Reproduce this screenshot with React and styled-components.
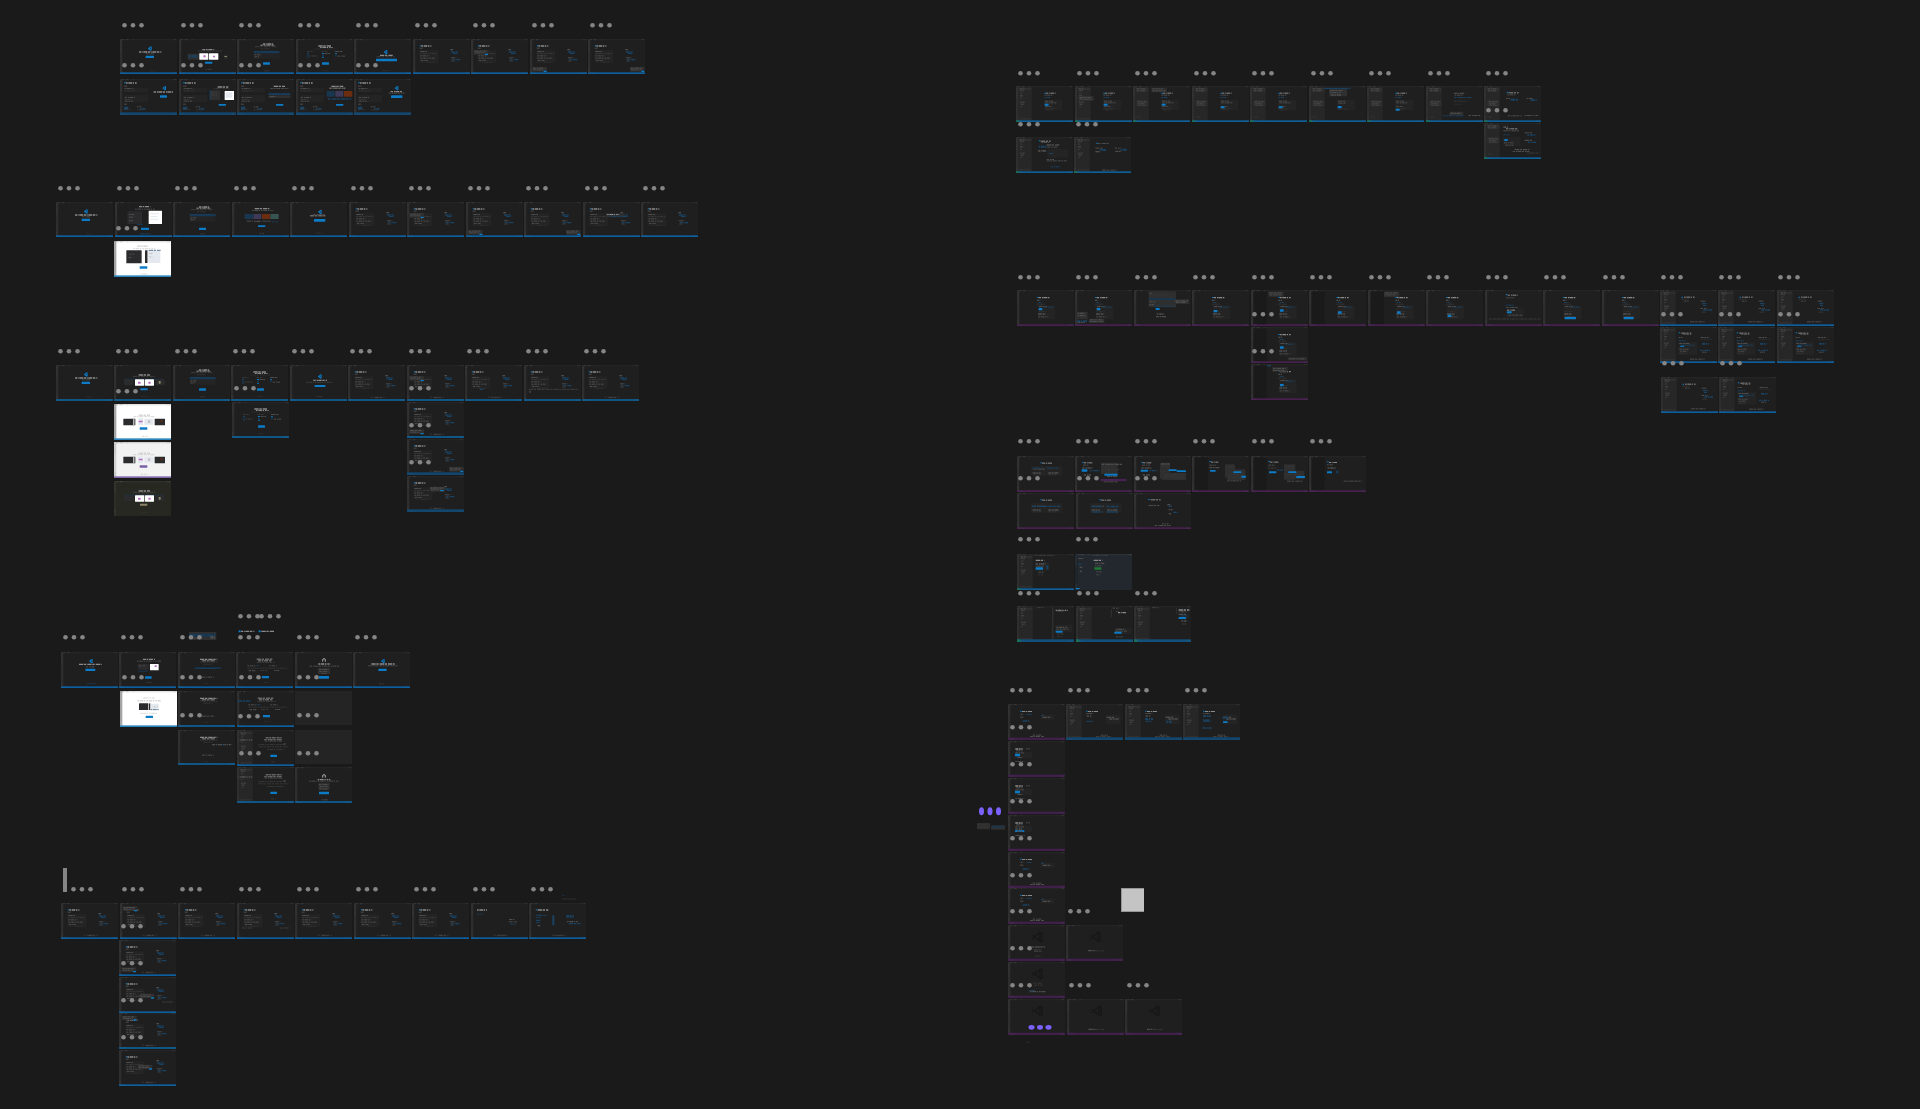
import React from "react";
import styled, { createGlobalStyle, css } from "styled-components";

const Global = createGlobalStyle`
  body { margin: 0; background: #1a1a1a; font-family: Inter, "Liberation Sans", sans-serif; }
`;

const Canvas = styled.main`
  position: relative;
  width: 100%;
  min-height: 100vh;
  overflow: hidden;
  background: #1a1a1a;
`;

const onCanvas = css`
  position: absolute;
  left: ${(p) => p.$x}px;
  top: ${(p) => p.$y}px;
`;

// A horizontal run of equal slots on the canvas.
const Strip = styled.section`
  ${onCanvas}
  display: flex;
  justify-content: space-between;
  align-items: flex-start;
  width: ${(p) => Math.floor((p.$count - 1) * 58.5) + 57}px;
`;

const Slot = styled.div`
  flex: 0 0 57px;
`;

const FrameBox = styled.article`
  flex: 0 0 57px;
  height: ${(p) => p.$h}px;
  background: ${(p) => p.$bg};
  svg { display: block; width: 100%; height: 100%; }
`;

const Loose = styled.div`
  ${onCanvas}
  svg { display: block; }
`;

const Block = styled.div`
  ${onCanvas}
  width: ${(p) => p.$w}px;
  height: ${(p) => p.$h}px;
  background: ${(p) => p.$c};
`;

const Swatch = styled(Block)`
  box-sizing: border-box;
  border: 1px solid #969696;
  border-right: 0;
`;

const INK = {
  t: "#4d4d4d",
  T: "#8a8a8a",
  d: "#363636",
  b: "#1a4262",
  c: "#c4c4c4",
  B: "#0c7bc8",
  p: "#242424",
  P: "#2f2f2f",
  w: "#ffffff",
  k: "#2b2b2d",
  m: "#b76fc4",
  n: "#183650",
  v: "#3e3957",
  o: "#6b2c10",
  g: "#375452",
  u: "#7b5ea9",
  G: "#1f7a33",
  U: "#4b2155",
  y: "#8b8468",
  l: "#e4e8ef",
};

const DASHES = ["9 2 5 2 12 3", "5 2 11 2 4 3", "13 2 7 3", "7 3 4 1 10 2"];

// Each mark is "kind x y width height", in thirds of a screen pixel.
// t, T, d, b and c are lines of writing; the others are filled shapes.
function Marks({ spec }) {
  return spec
    .split(",")
    .map((s) => s.trim())
    .filter(Boolean)
    .map((s, i) => {
      const [k, ...n] = s.split(" ");
      const [x, y, w, h = 3] = n.map(Number);
      if (k === "tri") return <path key={i} d={`M${x} ${y + 5}l8-6 3 1v11l-3 1-8-6zM${x + 5} ${y + 5}l3 3v-6z`} fill="#0c7bc8" />;
      if (k === "logo")
        return (
          <path
            key={i}
            d={`M${x + 2} ${y + 11}L${x + 26} ${y + 28}V${y + 3}L${x + 2} ${y + 21}M${x + 26} ${y + 1}l7 4v22l-7 4`}
            fill="none"
            stroke="#171717"
            strokeWidth="4"
          />
        );
      if (k === "bell") return <path key={i} d={`M${x + 1} ${y + 10}v-5a4 4 0 0 1 8 0v5`} fill="none" stroke="#a8a8a8" strokeWidth="3" />;
      if ("tTdbc".includes(k))
        return (
          <line
            key={i}
            x1={x}
            x2={x + w}
            y1={y + h / 2}
            y2={y + h / 2}
            stroke={INK[k]}
            strokeWidth={h}
            strokeDasharray={DASHES[(x + y + i) % 4]}
          />
        );
      return <rect key={i} x={x} y={y} width={w} height={h} fill={INK[k]} rx="1" />;
    });
}

const TONES = {
  dark: { bg: "#1f1f1f", rail: "#2e2e2e", top: "#242424", tick: "#444444" },
  white: { bg: "#ffffff", rail: "#8c8c8c", top: "#e2e2e2", tick: "#b8b8b8" },
  light: { bg: "#f2f2f2", rail: "#c8c8c8", top: "#d2d2d2", tick: "#a8a8a8" },
  olive: { bg: "#272822", rail: "#2e2f29", top: "#30312b", tick: "#55554b" },
  slate: { bg: "#22282e", rail: "#1f252b", top: "#2a3138", tick: "#46525d" },
  empty: { bg: "#242424" },
};

const BARS = {
  blue: ["#0b5f9f", 5],
  deep: ["#12466d", 8],
  mid: ["#0f5687", 6],
  purple: ["#48204f", 5],
  plum: ["#40204a", 7],
  lilac: ["#8069ab", 5],
  sky: ["#2f86be", 5],
  run: ["#0d5f98", 5],
  runDeep: ["#12507b", 8],
};

function Frame({ h = 36, tone = "dark", bar = "blue", side, spec = "" }) {
  const c = TONES[tone];
  const H = h * 3;
  const b = BARS[bar];
  return (
    <FrameBox $h={h} $bg={c.bg}>
      {tone !== "empty" && (
        <svg viewBox={`0 0 171 ${H}`} preserveAspectRatio="none" aria-hidden="true">
          {side && <rect x="7" y="3" width="40" height={H - 3} fill={side === "dim" ? "#1a1a1a" : "#272727"} />}
          <rect width="171" height="4" fill={c.top} />
          <line x1="5" x2="42" y1="2" y2="2" stroke={c.tick} strokeWidth="2" strokeDasharray="7 5 9 14" />
          <line x1="160" x2="169" y1="2" y2="2" stroke={c.tick} strokeWidth="2" strokeDasharray="3 2" />
          <rect width="7" height={H} fill={c.rail} opacity={tone === "dark" ? 1 : 0.8} />
          <line x1="3" x2="3" y1="6" y2="36" stroke={c.tick} strokeWidth="3" strokeDasharray="3 4" opacity=".7" />
          <line x1="3" x2="3" y1={H - 16} y2={H - 6} stroke={c.tick} strokeWidth="3" strokeDasharray="3 3" opacity=".7" />
          {side === "full" && (
            <Marks spec={`P 8 5 38 7, t 11 7 16 3, t 11 13 13 2, t 12 20 8 2, t 12 28 9 3, t 12 36 7 2, t 12 47 14 3, t 14 53 9 3, t 13 60 6 2, P 8 ${H - 12} 38 5`} />
          )}
          {side === "groups" && (
            <Marks spec={`P 8 5 38 12, t 11 7 28 3, t 12 13 24 3, P 10 43 36 18, t 14 46 26 3, t 16 52 20 3, t 16 57 22 2, d 11 ${H - 16} 14 2`} />
          )}
          <Marks spec={spec} />
          {b && <rect y={H - b[1]} width="171" height={b[1]} fill={b[0]} />}
          {bar.startsWith("run") && <rect y={H - b[1]} width="10" height={b[1]} fill="#176f55" />}
          {b && tone === "dark" && (
            <path d={`M4 ${H - 3}h15M157 ${H - 3}h10`} stroke="#7899b0" strokeWidth="1" strokeDasharray="4 2" opacity=".4" />
          )}
        </svg>
      )}
    </FrameBox>
  );
}

function Dots({ color = "#858585", shape }) {
  const [rx, ry] = shape === "tall" ? [2.5, 4] : shape === "wide" ? [3, 2.4] : [2.3, 2.3];
  return (
    <svg width="28" height="10" display="block" aria-hidden="true">
      {[4.5, 13, 21.5].map((cx) => (
        <ellipse key={cx} cx={cx} cy="5.3" rx={rx} ry={ry} fill={color} />
      ))}
    </svg>
  );
}

const S = {
  welcome: "tri 84 23 0 0, T 57 37 67 4, t 78 43 24 3, B 77 50 25 7, d 92 95 14 2",
  welcomeWide: "tri 84 24 0 0, t 70 36 36 3, T 60 40 46 3, B 72 51 34 8, d 78 92 20 2",
  done: "tri 84 29 0 0, T 70 44 42 4, t 48 51 80 2, B 74 60 32 6, d 80 93 16 3",
  themes: "T 70 30 36 4, t 58 35 70 2, P 26 44 34 18, b 28 48 28 8, w 61 43 27 19, w 90 43 28 19, m 73 49 7 6, m 102 50 6 5, k 136 47 10 14, y 136 51 8 3, B 78 68 22 6, t 80 90 20 2",
  themesRow: "T 74 28 34 4, t 56 33 68 2, n 30 41 118 3, k 30 43 28 18, w 63 43 28 19, w 93 43 27 19, m 72 50 8 6, m 103 50 7 6, k 124 43 28 18, y 134 48 6 8, B 79 70 22 6, d 82 94 20 2",
  lightThemes: "c 74 32 34 3, c 58 37 66 2, k 28 44 36 20, w 58 45 3 18, l 73 43 14 20, m 74 50 12 5, l 91 44 27 18, c 102 49 7 8, k 122 44 31 20, o 140 49 5 6",
  cards: "T 78 13 30 4, T 70 17 42 3, t 54 22 66 2, d 72 28 26 3, p 50 35 78 24, n 50 36 78 7, b 52 37 70 3, t 52 46 20 3, t 52 52 14 3, B 78 70 21 7, d 82 94 16 3",
  columns: "T 67 19 40 4, T 72 24 38 3, d 58 29 62 2, d 33 36 20 3, b 33 42 6 3, b 33 47 6 3, b 33 53 6 3, t 40 50 26 2, d 76 36 20 3, B 78 42 6 3, b 78 47 6 3, B 78 53 6 3, t 86 42 18 3, t 117 36 22 3, B 117 43 6 3, b 117 49 6 3, t 125 50 22 3, B 78 70 21 7, d 80 94 18 2",
  start: "B 20 19 5 3, T 25 19 30 4, t 20 26 9 3, p 19 34 57 38, t 22 36 20 3, d 22 42 50 3, t 22 49 28 3, t 22 56 43 3, t 24 63 20 3, d 42 69 22 2, t 112 30 8 4, b 114 37 20 4, b 120 42 16 3, t 114 55 16 3, b 117 60 27 4, t 114 65 12 2",
};
const sign = ", d 68 95 44 3, t 80 97 22 2";
const pop = (x, y) => `, P ${x} ${y} 44 14, t ${x + 2} ${y + 2} 34 3, t ${x + 3} ${y + 7} 30 3, B ${x + 34} ${y + 11} 9 4`;
const splitLeft = "B 12 10 6 3, T 18 10 32 4, t 12 20 10 3, p 12 27 72 13, t 14 27 28 3, d 14 34 34 3, p 12 48 72 22, t 14 54 31 3, d 14 60 20 3, t 14 65 25 3, t 12 74 9 3, b 12 83 14 10, d 17 90 14 3, t 50 82 14 3, b 60 87 16 5, d 51 91 22 3";
const mono = (dx = 0, by = 54, bw = 11) =>
  `B ${60 + dx} 21 5 3, T ${65 + dx} 21 32 4, t ${60 + dx} 29 11 4, b ${64 + dx} 36 12 3, d ${60 + dx} 41 24 3, p ${62 + dx} 46 53 42, t ${66 + dx} 48 24 3, b ${82 + dx} 50 28 3, d ${65 + dx} 64 26 2, t ${63 + dx} 70 23 4, t ${64 + dx} 79 30 3, B ${65 + dx} ${by} ${bw} 7`;
const workMono = (by = 53) =>
  `B 85 20 5 3, T 90 20 29 3, t 85 26 26 3, b 85 33 20 3, p 84 42 54 30, t 87 44 24 3, t 88 49 33 3, t 88 60 18 3, d 86 66 30 2, d 90 71 20 2, B 86 ${by} 12 6`;
const docs = "B 64 20 5 3, T 72 20 32 3, d 64 26 22 3, t 72 32 14 3, t 122 32 16 3, b 126 39 16 4, b 129 45 10 3, t 122 54 18 3, b 130 58 26 4, d 124 65 16 3, t 90 94 44 3";
const docsCard = "B 56 16 5 3, T 64 17 30 3, t 70 21 24 3, t 56 30 12 3, b 56 40 22 3, p 55 45 56 38, t 58 48 30 3, b 64 53 40 3, B 60 56 13 3, t 58 65 28 3, t 60 71 22 3, d 58 77 24 3, t 122 30 24 3, d 124 36 34 2, b 126 48 20 5, b 120 68 30 4, t 126 74 15 3, t 90 95 44 3";
const wide = "B 70 19 5 3, T 75 20 32 3, p 42 30 94 29, t 50 38 36 3, t 47 49 24 4, t 94 49 30 4, d 50 55 24 3, d 94 55 24 3";

const strips = [];
const row = (x, y, cells, base = {}) =>
  strips.push({ x, y, cells: cells.map((c) => c && { ...base, ...(typeof c === "string" ? { spec: c } : c) }) });
const col = (index, ...cells) => [...Array(index).fill(null), ...cells];
const range = (n) => Array.from({ length: n }, (_, i) => i);
const dotRow = (x, y, indexes) => {
  const cells = Array(Math.max(...indexes) + 1).fill(null);
  indexes.forEach((i) => (cells[i] = { dots: true }));
  strips.push({ x, y: y - 5, cells, over: true });
};

// Onboarding, first pass
row(120, 39, [
  S.welcome,
  S.themes,
  S.cards,
  S.columns,
  "tri 89 34 0 0, T 78 47 38 4, t 68 52 54 2, B 66 59 63 8, d 84 94 26 2",
  S.start,
  S.start + pop(8, 33),
  S.start + pop(7, 84),
  S.start + pop(126, 84),
], { h: 35 });
row(120, 79, [
  splitLeft + ", tri 127 22 0 0, T 101 37 58 4, B 120 49 21 7",
  splitLeft + ", T 116 22 32 4, t 104 28 48 2, P 93 34 30 30, b 92 34 3 28, d 98 38 16 14, w 137 36 28 27, l 140 40 20 16, B 119 75 22 5",
  splitLeft + ", T 110 20 34 4, t 100 27 54 3, n 94 42 66 6, b 96 44 60 3, P 94 49 66 8, t 98 51 18 3, B 117 75 22 5",
  splitLeft + ", T 106 20 36 4, T 100 26 48 3, n 92 36 24 17, v 118 36 24 17, o 144 36 25 17, b 96 58 70 4, B 120 75 22 5",
  splitLeft + ", tri 122 22 0 0, T 110 36 34 4, t 104 41 48 3, B 111 49 34 8",
], { bar: "deep" });
dotRow(120, 25, range(9));
dotRow(120, 65, range(5));

// Onboarding, second pass
row(56, 202, [
  S.welcome,
  "T 72 12 34 4, t 60 20 60 3, k 37 28 44 38, t 42 36 16 3, t 42 44 14 3, t 42 54 12 4, w 101 26 40 40, l 106 34 26 3, l 106 42 22 3, l 106 50 24 3, n 66 66 18 3, B 78 77 24 7, b 76 94 30 3",
  S.cards.replace("B 78 70", "B 78 77"),
  "T 68 18 44 4, t 60 24 64 3, n 38 36 25 15, v 64 36 24 15, o 90 36 24 15, g 115 36 25 15, t 44 56 18 3, t 66 56 22 4, t 92 56 24 3, b 120 58 18 3, B 78 70 22 5, d 82 92 14 4",
  S.welcomeWide,
  S.start,
  S.start + pop(7, 33),
  S.start + pop(6, 84),
  S.start + pop(126, 84),
  S.start + ", P 68 34 58 12, T 72 36 36 3, b 82 41 44 4",
  S.start,
], { h: 35 });
row(56, 241, col(1, { tone: "white", bar: "sky", spec: "c 70 14 34 3, c 58 22 66 2, k 37 28 46 39, t 46 38 16 3, t 44 48 10 3, k 93 28 8 38, l 101 28 38 38, b 104 27 36 2, c 106 36 10 3, c 106 46 9 3, B 77 76 23 7, c 80 98 22 2" }));
dotRow(56, 188, range(11));
dotRow(56, 228, [1]);

// Onboarding, third pass
row(56, 365, [
  S.welcome,
  S.themesRow,
  S.cards,
  S.columns,
  S.done,
  S.start + sign,
  S.start + pop(7, 33) + sign,
  S.start + ", b 44 72 14 3" + sign,
  S.start + ", t 14 72 150 2, t 16 77 4 6",
  S.start + sign,
], { bar: "mid" });
row(56, 402, [null, null, null, S.columns, null, null, S.start + pop(7, 82) + sign], { bar: "mid" });
row(56, 404, col(1, { tone: "white", bar: "sky", spec: S.lightThemes + ", B 77 70 23 7, c 84 96 18 2" }));
row(56, 442, col(1, { tone: "light", bar: "lilac", spec: S.lightThemes + ", u 77 70 23 7, c 80 96 20 2" }));
row(56, 481, col(1, { h: 35, tone: "olive", bar: "none", spec: S.themesRow.replace("B 79 70 22 6", "y 78 68 22 6") }));
row(56, 439, col(6, S.start + pop(126, 84) + sign), { bar: "deep" });
row(56, 476, col(6, S.start + ", P 68 32 46 15, t 70 34 40 4, t 72 40 30 3, B 100 42 10 4" + sign), { bar: "deep" });
dotRow(56, 351, range(10));
dotRow(56, 391, [1]);
dotRow(56, 388, [3, 6]);
dotRow(56, 425, [6]);
dotRow(56, 462, [6]);

// Onboarding, fourth pass
const list = "T 66 20 52 4, T 72 25 40 3, t 66 29 54 2, d 76 35 28 3, n 50 46 78 5, b 54 48 60 2, t 72 74 36 3, d 76 94 16 2";
const grid = "T 62 20 50 3, T 66 25 40 3, t 62 30 54 2, t 34 40 26 3, b 62 39 8 4, t 100 40 22 3, d 34 47 120 3, t 38 54 20 4, d 72 54 24 3, t 114 54 16 3, B 78 72 21 7, d 82 91 18 2";
row(61, 652, [
  "tri 84 22 0 0, T 54 35 68 4, t 74 43 28 3, B 73 50 30 7, b 78 94 26 2",
  "T 72 20 36 4, t 54 26 72 3, k 56 36 34 17, t 60 40 18 3, w 93 36 26 19, m 107 40 6 5, n 58 56 28 3, B 78 73 20 7, d 82 90 16 3",
  list,
  grid,
  "bell 82 19 0 0, T 70 34 36 4, t 44 41 88 3, P 69 48 36 18, t 72 51 28 3, t 73 57 24 3, t 80 63 14 3, B 72 72 30 8",
  "tri 84 22 0 0, T 55 34 70 4, t 46 40 88 3, B 76 50 25 7, d 78 94 18 3",
]);
row(61, 691, [
  null,
  { tone: "white", bar: "sky", spec: "c 70 20 34 2, c 52 28 70 3, k 57 37 28 20, k 87 37 4 20, l 92 38 24 18, c 100 46 14 3, b 92 55 26 2, c 60 66 52 2, B 77 74 22 7" },
  { bar: "mid", spec: list.replace("n 50 46 78 5, b 54 48 60 2, ", "") },
  grid + ", b 2 28 40 4",
  { tone: "empty", h: 34 },
]);
const offset = "T 86 22 48 3, T 82 28 52 3, t 84 33 54 2, d 64 42 80 3, t 140 40 6 4, d 64 49 88 3, d 90 57 50 3, B 100 74 20 7, d 102 94 14 3, t 8 28 38 4";
row(61, 730, [
  null,
  null,
  { h: 35, bar: "mid", spec: list.replace("n 50 46 78 5, b 54 48 60 2", "t 102 42 58 4, b 132 43 8 3") },
  { side: "full", spec: offset },
  { tone: "empty", h: 34 },
]);
row(61, 767, col(3,
  { side: "full", spec: offset },
  { spec: "bell 82 22 0 0, T 68 36 38 4, t 42 41 90 3, P 70 47 34 22, t 72 51 28 3, t 74 57 24 3, t 73 64 24 3, B 72 74 30 8, t 80 97 18 3" }
), { bar: "mid" });
dotRow(61, 637, range(6));
dotRow(236, 616, [0]);
dotRow(257, 616, [0]);
dotRow(61, 677, [1, 2, 3, 4]);
dotRow(61, 715, [2, 4]);
dotRow(61, 716, [3]);
dotRow(61, 753, [3, 4]);

// Getting started
row(61, 903, [
  S.start + sign,
  S.start + pop(8, 10) + sign,
  S.start + sign,
  S.start + ", t 14 74 34 2, t 128 74 30 2",
  S.start + sign,
  S.start + sign,
  S.start + sign,
  "T 18 19 30 4, b 18 32 18 3, t 114 48 18 3, t 114 55 24 3, b 118 62 18 3" + sign,
  "B 20 19 5 3, T 26 19 32 4, b 20 35 34 4, b 22 42 14 3, b 20 50 16 4, b 22 57 12 4, t 26 66 8 4, b 70 37 6 30, b 112 36 22 8, t 114 54 34 4, b 120 60 34 4" + sign,
]);
row(61, 940, col(1, S.start + pop(8, 82) + sign));
row(61, 977, col(1, S.start + pop(62, 50) + ", t 130 74 34 2"));
row(61, 1013, col(1, { bar: "mid", spec: S.start + pop(9, 8) + sign }));
row(61, 1050, col(1, S.start + pop(56, 44) + sign));
dotRow(69, 889, [0]);
dotRow(120, 889, range(8));
[926, 963, 1000, 1037].forEach((y) => dotRow(61, y, [1]));

// Workspace with side bar
row(1016, 86, [
  { side: "full", spec: workMono() },
  { side: "full", spec: workMono() + ", P 10 30 46 14, t 13 33 34 3, t 13 38 38 3" },
  { side: "groups", spec: workMono() + ", P 55 5 46 14, t 58 7 34 3, t 58 13 40 3" },
  { side: "groups", spec: workMono(61) },
  { side: "groups", spec: workMono(61) },
  { side: "groups", spec: "n 45 5 80 4, b 47 6 70 3, P 60 9 54 22, t 63 12 40 3, t 63 18 34 3, t 66 25 30 4, p 84 42 54 30, t 87 44 24 3, t 88 50 22 3, B 86 60 12 7, d 88 69 30 2" },
  { side: "groups", spec: workMono(68) },
  { side: "groups", spec: "t 84 20 34 4, t 86 26 24 3, b 84 33 54 3, d 84 44 40 3, d 86 54 22 2, P 70 77 42 12, t 74 80 30 4, b 52 88 60 3, t 128 87 38 3" },
  { side: "groups", spec: "B 68 18 5 3, T 74 19 30 3, t 70 25 24 3, t 66 36 12 3, b 80 38 22 6, t 128 36 18 3, b 140 40 18 5, t 72 88 42 3, t 122 87 40 3" },
], { bar: "run" });
row(1016, 137, [
  { side: "full", spec: "B 68 10 5 3, T 74 11 30 3, t 76 15 26 3, b 68 26 24 6, t 92 22 38 4, t 94 29 32 3, t 66 39 24 5, p 94 36 62 26, b 98 48 14 3, t 92 66 22 3, t 92 70 60 3, b 104 88 28 3" },
  { side: "full", spec: "B 66 17 5 3, t 72 18 32 3, t 64 32 24 3, b 78 36 20 6, t 64 42 14 4, t 122 32 18 3, b 140 35 18 6, t 124 41 18 4, t 84 98 44 3" },
], { bar: "run" });
row(1016, 123, col(8, { side: "groups", spec: "t 58 10 14 5, T 66 16 34 3, t 58 22 50 3, b 58 34 20 3, p 56 42 54 28, B 61 48 10 6, t 60 58 28 3, t 64 65 24 3, t 122 28 24 3, b 130 34 26 4, t 122 50 24 4, b 132 56 24 4, t 92 78 44 4, t 86 84 50 3, t 130 89 36 2" }), { bar: "run" });
dotRow(1016, 73, range(9));
dotRow(1016, 124, [0, 1]);
dotRow(1016, 110, [8]);

// Empty window walkthroughs
row(1017, 290, [
  mono(),
  mono() + ", P 6 66 32 22, t 8 68 22 4, t 8 75 26 4, b 6 91 34 5, t 8 96 22 3, P 42 86 46 13, t 44 88 38 3, t 45 93 40 3",
  "P 44 4 82 48, t 46 8 10 3, d 48 14 50 3, n 44 25 82 5, t 46 34 20 3, t 46 42 14 4, b 60 47 62 3, B 65 54 12 6, P 120 28 46 14, t 124 31 38 4, t 126 36 32 3, t 68 70 22 4, t 66 78 30 4",
  mono(0, 60),
  { side: "dim", spec: mono(22, 58) + ", P 52 5 46 15, t 54 7 38 3, t 56 13 34 3" },
  { side: "dim", spec: mono(22, 64) },
  { side: "dim", spec: mono(22, 64) + ", P 48 5 46 16, t 50 7 38 3, t 50 13 34 3" },
  mono(0, 74),
  "B 62 12 5 3, T 68 14 30 3, t 64 22 24 3, b 62 44 24 3, t 64 51 34 3, p 62 56 54 27, T 66 59 24 3, B 66 64 14 6, t 70 74 42 3, t 12 86 154 2",
  mono(0, 81, 34),
  mono(0, 81, 30),
  { side: "full", bar: "blue", spec: docs },
  { side: "full", bar: "blue", spec: docs },
  { side: "full", bar: "blue", spec: docs },
], { bar: "purple" });
row(1017, 327, [
  ...Array(4).fill(null),
  { bar: "purple", side: "dim", spec: mono(22, 58) + ", P 110 91 58 9, t 114 94 48 3" },
  ...Array(6).fill(null),
  { side: "full", spec: docsCard },
  { side: "full", spec: docsCard },
  { side: "full", spec: docsCard },
]);
row(1017, 364, col(4, { bar: "purple", side: "dim", spec: mono(22, 60) + ", P 64 9 46 14, t 66 12 38 3, t 66 18 34 3, b 48 3 12 4" }));
row(1017, 377, col(11, { side: "full", spec: docs }, { side: "full", spec: docsCard }));
dotRow(1016, 277, range(14));
dotRow(1016, 314, [4, 11, 12, 13]);
dotRow(1016, 351, [4]);
dotRow(1016, 363, [11, 12]);

// Purple status bar set
row(1017, 456, [
  wide + ", b 46 35 34 3, b 90 35 34 3",
  "B 22 18 5 3, T 27 19 26 3, t 24 26 16 3, t 22 34 30 4, B 20 40 17 7, b 44 42 30 4, t 26 55 22 4, P 78 20 50 34, t 80 23 64 4, d 82 31 40 3, d 82 39 50 3, B 88 53 40 6, t 96 60 30 3, U 77 69 78 6, t 86 76 44 3",
  "B 22 18 5 3, T 27 19 26 3, t 24 26 24 3, t 22 34 30 4, B 20 41 22 6, b 46 42 26 4, t 26 55 22 4, P 78 20 30 48, t 82 22 24 4, d 84 30 20 3, d 84 46 20 3, B 104 40 24 5, B 128 43 28 5, P 84 50 72 22, d 90 54 54 4, d 90 61 60 4",
  { side: "dim", spec: "B 52 15 5 3, T 57 17 22 3, t 52 26 20 3, t 52 33 30 4, B 54 42 17 5, P 99 25 30 40, P 106 40 54 32, d 104 30 24 4, B 124 46 24 5, d 108 54 44 4, d 108 62 40 3, B 148 59 14 6, t 106 73 42 3" },
  { side: "dim", spec: "B 52 15 5 3, T 57 17 26 3, t 52 26 20 3, d 52 34 26 4, B 54 46 22 6, b 78 40 18 4, P 99 25 34 46, d 104 30 24 4, P 108 44 52 26, B 112 46 24 5, d 108 54 44 4, B 136 60 26 6, t 108 74 46 3" },
  { side: "dim", spec: "B 54 16 5 3, T 60 18 24 3, t 54 25 18 3, t 56 34 24 4, B 54 46 15 6, b 82 44 6 8, t 104 74 54 3" },
], { bar: "purple" });
row(1017, 493, [
  wide + ", b 44 38 86 4",
  wide + ", b 46 38 34 5, b 92 38 36 5, b 48 55 32 4, b 92 55 34 4",
  "B 42 18 5 3, T 50 19 30 3, t 44 36 32 3, t 100 33 10 4, b 104 38 10 4, t 104 48 12 4, b 118 56 14 4, t 104 60 10 4, t 84 91 20 3, t 62 96 48 3",
], { bar: "purple" });
row(1017, 554, [
  { side: "full", bar: "run", spec: "t 52 3 60 2, T 56 17 26 4, p 54 24 44 26, t 56 28 30 4, b 88 34 6 12, t 58 35 22 3, B 56 40 22 7, t 64 53 18 3, d 64 61 14 3" },
  { tone: "slate", bar: "none", spec: "t 10 12 16 3, b 12 28 8 4, t 14 38 8 4, t 14 50 10 4, t 54 3 44 2, T 56 17 26 4, t 60 26 28 4, t 60 34 22 3, G 58 40 21 7, t 64 52 16 3, t 64 61 12 3, B 2 102 12 4" },
]);
row(1017, 606, [
  { side: "full", spec: "t 60 4 20 2, d 106 4 3 96, T 116 11 36 4, t 120 14 22 3, p 114 56 52 22, t 118 62 32 4, t 118 68 38 3, B 116 74 21 6, t 120 83 20 2, d 120 90 16 3" },
  { side: "full", spec: "t 110 5 18 3, d 106 9 2 24, t 120 15 8 3, T 126 18 24 4, p 114 66 52 18, t 120 68 28 4, t 118 74 34 3, B 115 77 22 6, t 120 91 20 3" },
  { side: "full", spec: "t 54 4 20 2, d 126 5 2 20, T 134 10 32 4, t 134 16 28 3, p 133 25 32 15, t 134 23 24 4, b 142 28 20 3, B 134 33 22 6, t 142 43 16 4, d 144 52 12 4" },
], { bar: "runDeep" });
dotRow(1016, 441, range(6));
dotRow(1016, 478, [0, 1, 2]);
dotRow(1016, 539, [0, 1]);
dotRow(1016, 593, [0, 1, 2]);

// Blank states
const help = "B 36 20 5 3, T 42 21 30 3, t 38 29 8 4, b 56 30 14 3, t 36 38 10 3, b 44 49 20 4, p 98 32 42 15, b 100 32 10 4, t 104 38 26 4, t 74 92 28 3, t 66 96 44 3";
const helpSide = "B 60 20 5 3, T 66 21 30 3, t 60 27 22 3, t 62 34 14 4, b 62 50 20 4, p 120 32 44 28, t 122 38 22 4, t 130 43 28 4, t 104 92 22 3, t 90 97 46 3";
row(1008, 704, [
  { bar: "plum", spec: help },
  { side: "full", spec: helpSide },
  { side: "full", spec: helpSide + ", b 60 42 24 6, b 124 50 16 6" },
  { side: "full", spec: helpSide + ", b 60 34 24 5, b 60 46 22 5, b 58 70 28 4, b 118 38 18 6, B 120 52 14 5" },
], { bar: "deep" });
const prompt = "T 22 22 22 4, t 54 22 12 3, t 24 28 20 3, p 20 33 52 18, t 22 34 26 3, B 21 38 15 8, t 28 48 16 3, t 22 60 28 3";
row(1008, 741, [prompt], { bar: "plum" });
row(1008, 778, [prompt], { bar: "plum" });
row(1008, 815, [prompt.replace("B 21 38 15 8", "t 22 40 20 4, B 21 46 28 5")], { bar: "plum" });
row(1008, 852, [help], { bar: "plum" });
row(1008, 888, [help], { bar: "plum" });
const logo = "logo 70 20 0 0";
row(1008, 925, [logo + ", t 70 64 42 4, d 76 72 26 3, t 78 77 24 3, d 80 92 20 3", logo + ", t 66 75 20 4, d 86 76 28 3"], { bar: "plum" });
row(1008, 962, [logo + ", d 76 62 26 3, d 78 68 26 3, b 62 84 18 3, t 66 87 48 4"], { bar: "plum" });
row(1008, 999, [logo, logo + ", t 64 89 20 4, d 84 90 28 3", logo + ", t 66 89 20 4, d 84 90 28 3"], { bar: "plum" });
dotRow(1008, 690, range(4));
[727, 764, 801, 838, 875].forEach((y) => dotRow(1008, y, [0]));
dotRow(1008, 911, [0, 1]);
dotRow(1008, 948, [0]);
dotRow(1008, 985, [0, 1, 2]);

const sketches = [
  { x: 189, y: 632, w: 28, h: 9, spec: "P 0 0 82 24, n 0 5 80 9, b 3 8 70 3, t 4 17 24 3, t 64 12 14 8" },
  { x: 238, y: 629, w: 38, h: 5, spec: "B 2 4 6 6, T 9 5 40 4, B 62 4 6 6, T 70 5 38 4" },
  { x: 561, y: 894, w: 16, h: 8, spec: "b 4 3 6 2, p 2 12 42 6" },
  { x: 977, y: 823, w: 28, h: 8, spec: "P 0 0 39 19, d 3 3 30 2, d 3 11 30 3, P 42 7 42 13, n 42 8 40 3, b 44 12 30 2" },
  { x: 1025, y: 1041, w: 6, h: 3, spec: "p 2 1 12 5" },
];

const byLayer = [...strips.filter((s) => !s.over), ...strips.filter((s) => s.over)];

export default function App() {
  return (
    <>
      <Global />
      <Canvas aria-label="Design canvas">
        {sketches.map((s) => (
          <Loose key={s.x} $x={s.x} $y={s.y}>
            <svg width={s.w} height={s.h} viewBox={`0 0 ${s.w * 3} ${s.h * 3}`} aria-hidden="true">
              <Marks spec={s.spec} />
            </svg>
          </Loose>
        ))}
        <Block $x={63} $y={868} $w={4} $h={24} $c="#858585" />
        <Swatch $x={1121} $y={888} $w={23} $h={24} $c="#c4c4c4" />
        {byLayer.map((strip, i) => (
          <Strip key={i} $x={strip.x} $y={strip.y} $count={strip.cells.length}>
            {strip.cells.map((cell, j) =>
              cell && !cell.dots ? <Frame key={j} {...cell} /> : <Slot key={j}>{cell && <Dots />}</Slot>
            )}
          </Strip>
        ))}
        <Loose $x={977} $y={806}>
          <Dots color="#7b61ff" shape="tall" />
        </Loose>
        <Loose $x={1027} $y={1022}>
          <Dots color="#7b61ff" shape="wide" />
        </Loose>
      </Canvas>
    </>
  );
}
